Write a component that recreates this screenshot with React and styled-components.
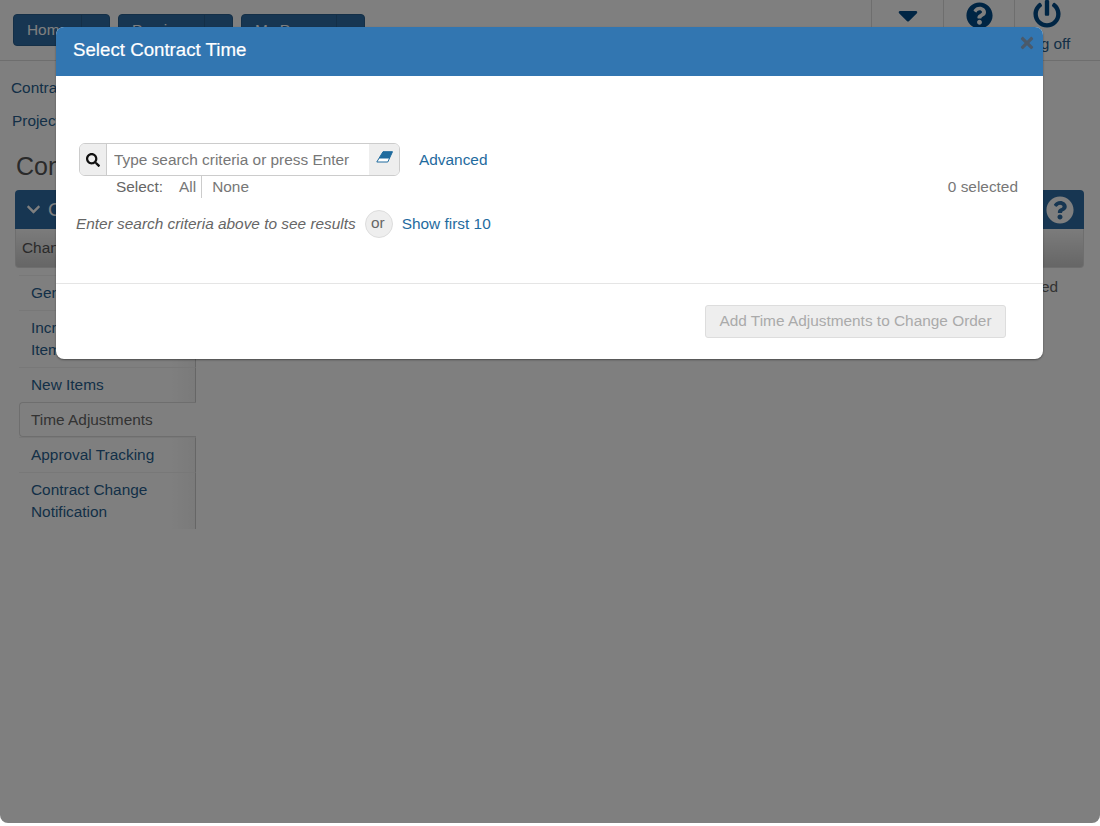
import React from "react";
import styled, { createGlobalStyle } from "styled-components";
import {
  FaCaretDown,
  FaChevronDown,
  FaPowerOff,
  FaQuestionCircle,
  FaSearch,
  FaTimes,
} from "react-icons/fa";

const GlobalStyle = createGlobalStyle`
  html, body {
    margin: 0;
    padding: 0;
    background: #fff;
  }
  body {
    font-family: "Liberation Sans", Arial, sans-serif;
    font-size: 15.4px;
  }
`;

//Page behind the modal
const Page = styled.div`
  position: relative;
  width: 1100px;
  height: 823px;
  overflow: hidden;
  background: #fff;
  border-radius: 0 0 8px 8px;
  color: #555;
`;
const TopBar = styled.header`
  display: flex;
  justify-content: space-between;
  height: 60px;
  border-bottom: 1px solid #ddd;
`;
const MainNav = styled.nav`
  display: flex;
  gap: 8px;
  padding: 14px 0 0 13px;
`;
const NavButton = styled.div`
  display: flex;
  width: ${(p) => p.$width}px;
  height: 32px;
  box-sizing: border-box;
  border-radius: 4px;
  background: #2e6da4;
  border: 1px solid #285e8e;
  color: #fff;
`;
const NavLabel = styled.span`
  flex: 1;
  padding: 6px 0 0 13px;
`;
const NavCaret = styled.span`
  width: 27px;
  border-left: 1px solid #285e8e;
`;
const Tools = styled.div`
  display: flex;
  padding-right: 21px;
`;
const Tool = styled.div`
  width: ${(p) => p.$width}px;
  box-sizing: border-box;
  border-left: 1px solid #ddd;
  display: flex;
  flex-direction: column;
  align-items: center;
  color: #014a88;
  padding-top: ${(p) => p.$top}px;
`;
const CaretIcon = styled(FaCaretDown)`
  font-size: 32px;
  margin-top: -1px;
`;
const ToolLabel = styled.span`
  line-height: 16px;
  margin-top: 8px;
  color: #285f8f;
`;
const Crumbs = styled.div`
  padding-top: 10px;
`;
const Crumb = styled.div`
  height: 33px;
  line-height: 33px;
  padding-left: ${(p) => p.$left}px;
  color: #285f8f;
`;
const PageTitle = styled.h1`
  margin: 14px 0 0 16px;
  height: 39px;
  font-size: 25px;
  font-weight: 400;
  line-height: 30px;
`;
const Panel = styled.section`
  margin: 0 16px 0 15px;
`;
const PanelBar = styled.div`
  display: flex;
  justify-content: space-between;
  align-items: center;
  height: 39px;
  padding: 0 10px 0 11px;
  background: #2e6da4;
  border-radius: 4px 4px 0 0;
  color: #fff;
`;
const PanelName = styled.div`
  display: flex;
  align-items: center;
  gap: 7px;
  font-size: 19px;
  line-height: 14px;
`;
const HelpIcon = styled(FaQuestionCircle)`
  font-size: 28px;
`;
const TabRow = styled.div`
  height: 39px;
  line-height: 37px;
  padding-left: 6px;
  box-sizing: border-box;
  border: 1px solid #ddd;
  border-top: 0;
  border-radius: 0 0 4px 4px;
  background: linear-gradient(#f8f8f8, #ccc);
`;
const PanelBody = styled.div`
  display: flex;
  justify-content: space-between;
`;
const SideNav = styled.ul`
  list-style: none;
  margin: 7px 0 0 4px;
  padding: 0;
  width: 177px;
`;
const SideItem = styled.li`
  box-sizing: border-box;
  padding: ${(p) => (p.$active ? "6px 11px 5px" : "6px 12px")};
  line-height: 22px;
  color: ${(p) => (p.$active ? "#666" : "#285f8f")};
  border-top: 1px solid ${(p) => (p.$active ? "#ddd" : "#f0f0f0")};
  ${(p) =>
    p.$active
      ? `
    border: 1px solid #ddd;
    border-right: 0;
    border-radius: 4px 0 0 4px;
    background: #fff;
  `
      : `
    border-right: 1px solid #ccc;
    background: linear-gradient(to right, #fff 85%, #f5f5f5);
  `}
`;
const StatusText = styled.span`
  margin-top: 10px;
  margin-right: 26px;
  color: #666;
`;

//Modal
const Backdrop = styled.div`
  position: absolute;
  inset: 0;
  background: rgba(0, 0, 0, 0.5);
`;
const Modal = styled.div`
  position: absolute;
  left: 56px;
  top: 27px;
  width: 987px;
  height: 332px;
  display: flex;
  flex-direction: column;
  background: #fff;
  border-radius: 8px;
  box-shadow: 0 1px 2px rgba(0, 0, 0, 0.4);
`;
const ModalHeader = styled.div`
  display: flex;
  justify-content: space-between;
  height: 49px;
  flex: none;
  padding: 0 7px 0 17px;
  background: #3276b1;
  border-radius: 8px 8px 0 0;
  color: #fff;
`;
const ModalTitle = styled.h4`
  margin: 0;
  font-size: 18.7px;
  font-weight: 400;
  line-height: 46px;
  -webkit-text-stroke: 0.2px #fff;
`;
const CloseIcon = styled(FaTimes)`
  font-size: 18px;
  margin-top: 7px;
  color: #4a5a6b;
`;
const ModalBody = styled.div`
  flex: none;
  height: 208px;
  box-sizing: border-box;
  padding: 67px 25px 0 20px;
  border-bottom: 1px solid #e5e5e5;
`;
const SearchRow = styled.div`
  display: flex;
  align-items: center;
  margin-left: 3px;
`;
const SearchGroup = styled.div`
  display: flex;
  width: 321px;
  height: 33px;
  box-sizing: border-box;
  border: 1px solid #ccc;
  border-radius: 6px;
  overflow: hidden;
`;
const Addon = styled.span`
  display: flex;
  align-items: center;
  justify-content: center;
  flex: none;
  width: ${(p) => p.$width}px;
  background: #eee;
  color: #111;
  font-size: 14px;
`;
const SearchInput = styled.input`
  flex: 1;
  min-width: 0;
  border: 0;
  outline: 0;
  padding: 0 7px;
  border-left: 1px solid #ccc;
  font-family: inherit;
  font-size: 15.4px;
  &::placeholder {
    color: #777;
    opacity: 1;
  }
`;
const EraserIcon = styled.svg`
  width: 17px;
  height: 12px;
  margin-bottom: 6px;
`;
const TextLink = styled.a`
  color: #1f6b9e;
  margin-left: ${(p) => p.$left}px;
`;
const SelectRow = styled.div`
  display: flex;
  align-items: center;
  height: 22px;
  color: #777;
  padding-left: 40px;
`;
const SelectLabel = styled.span`
  color: #666;
  margin-right: 16px;
`;
const SelectOption = styled.span`
  height: 22px;
  line-height: 22px;
  padding: ${(p) => (p.$last ? "0 0 0 10px" : "0 5px 0 0")};
  ${(p) => !p.$last && "border-right: 1px solid #ccc;"}
`;
const SelectedCount = styled.span`
  margin-left: auto;
`;
const HintRow = styled.div`
  display: flex;
  align-items: center;
  margin-top: 12px;
  color: #666;
`;
const Hint = styled.em`
  margin-right: 9px;
`;
const OrBadge = styled.span`
  display: flex;
  align-items: center;
  justify-content: center;
  width: 28px;
  height: 28px;
  box-sizing: border-box;
  border: 1px solid #ddd;
  border-radius: 50%;
  background: #eee;
  padding: 0 2px 3px 0;
`;
const ModalFooter = styled.div`
  display: flex;
  justify-content: flex-end;
  padding: 21px 37px 0 0;
`;
const PrimaryButton = styled.button`
  width: 301px;
  height: 33px;
  padding: 0 0 2px;
  border: 1px solid #ddd;
  border-radius: 3px;
  background: #eee;
  color: #aaa;
  font-family: inherit;
  font-size: 15.4px;
`;

const sideItems = [
  { label: "General" },
  { label: "Increase Decrease Items" },
  { label: "New Items" },
  { label: "Time Adjustments", active: true },
  { label: "Approval Tracking" },
  { label: "Contract Change Notification" },
];

const App = () => {
  return (
    <>
      <GlobalStyle />
      <Page>
        <TopBar>
          <MainNav>
            <NavButton $width={97}>
              <NavLabel>Home</NavLabel>
              <NavCaret />
            </NavButton>
            <NavButton $width={115}>
              <NavLabel>Preview</NavLabel>
              <NavCaret />
            </NavButton>
            <NavButton $width={124}>
              <NavLabel>My Page</NavLabel>
              <NavCaret />
            </NavButton>
          </MainNav>
          <Tools>
            <Tool $width={72} $top={0}>
              <CaretIcon />
            </Tool>
            <Tool $width={71} $top={2}>
              <FaQuestionCircle size={27} />
            </Tool>
            <Tool $width={65} $top={0}>
              <FaPowerOff size={28} />
              <ToolLabel>Log off</ToolLabel>
            </Tool>
          </Tools>
        </TopBar>
        <Crumbs>
          <Crumb $left={11}>Contract</Crumb>
          <Crumb $left={12}>Project</Crumb>
        </Crumbs>
        <PageTitle>Contract</PageTitle>
        <Panel>
          <PanelBar>
            <PanelName>
              <FaChevronDown size={15} />
              Change Order
            </PanelName>
            <HelpIcon />
          </PanelBar>
          <TabRow>Change Order</TabRow>
          <PanelBody>
            <SideNav>
              {sideItems.map((item) => (
                <SideItem key={item.label} $active={item.active}>
                  {item.label}
                </SideItem>
              ))}
            </SideNav>
            <StatusText>Not started</StatusText>
          </PanelBody>
        </Panel>
        <Backdrop />
        <Modal>
          <ModalHeader>
            <ModalTitle>Select Contract Time</ModalTitle>
            <CloseIcon />
          </ModalHeader>
          <ModalBody>
            <SearchRow>
              <SearchGroup>
                <Addon $width={26}>
                  <FaSearch />
                </Addon>
                <SearchInput placeholder="Type search criteria or press Enter" />
                <Addon $width={30}>
                  <EraserIcon viewBox="0 0 17 12">
                    <path d="M7 .7h9.5L13.6 7H3.2z" fill="#1f6b9e" stroke="#1f6b9e" strokeLinejoin="round" />
                    <path d="M3.2 7h10.4l-1.8 4H.8z" fill="#fff" stroke="#1f6b9e" strokeLinejoin="round" />
                  </EraserIcon>
                </Addon>
              </SearchGroup>
              <TextLink $left={19}>Advanced</TextLink>
            </SearchRow>
            <SelectRow>
              <SelectLabel>Select:</SelectLabel>
              <SelectOption>All</SelectOption>
              <SelectOption $last>None</SelectOption>
              <SelectedCount>0 selected</SelectedCount>
            </SelectRow>
            <HintRow>
              <Hint>Enter search criteria above to see results</Hint>
              <OrBadge>or</OrBadge>
              <TextLink $left={9}>Show first 10</TextLink>
            </HintRow>
          </ModalBody>
          <ModalFooter>
            <PrimaryButton disabled>Add Time Adjustments to Change Order</PrimaryButton>
          </ModalFooter>
        </Modal>
      </Page>
    </>
  );
};

export default App;
